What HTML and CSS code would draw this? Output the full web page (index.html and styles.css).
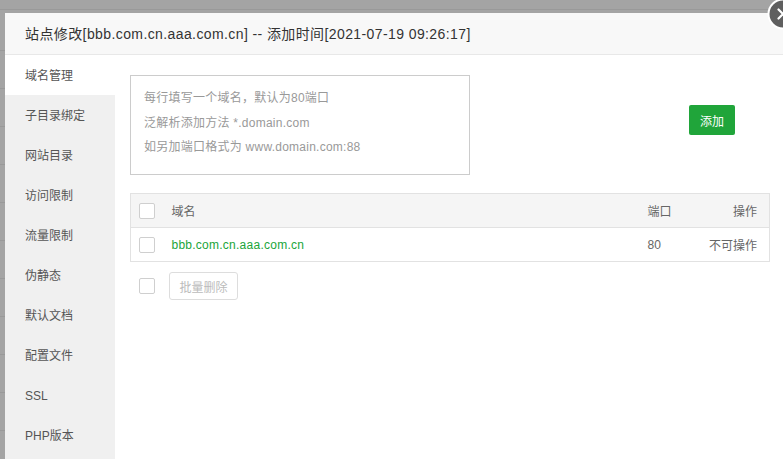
FILE: index.html
```html
<!DOCTYPE html>
<html lang="zh-CN">
<head>
<meta charset="utf-8">
<title>站点修改</title>
<link rel="stylesheet" href="styles.css">
</head>
<body>
<div class="layer">
  <div class="layer-title">站点修改[bbb.com.cn.aaa.com.cn] -- 添加时间[2021-07-19 09:26:17]</div>
  <span class="layer-close">
    <svg width="32" height="32" viewBox="0 0 32 32">
      <circle cx="16" cy="16" r="14.5" fill="#5f5f5f" stroke="#ffffff" stroke-width="2"/>
      <path d="M11.5 11.5 L20.5 20.5 M20.5 11.5 L11.5 20.5" stroke="#ffffff" stroke-width="2.2" stroke-linecap="round"/>
    </svg>
  </span>
  <div class="layer-body">
    <ul class="side-menu">
      <li class="active">域名管理</li>
      <li>子目录绑定</li>
      <li>网站目录</li>
      <li>访问限制</li>
      <li>流量限制</li>
      <li>伪静态</li>
      <li>默认文档</li>
      <li>配置文件</li>
      <li>SSL</li>
      <li>PHP版本</li>
    </ul>
    <div class="panel">
      <div class="add-row">
        <div class="domain-input">
          <div class="ph-line">每行填写一个域名，默认为80端口</div>
          <div class="ph-line">泛解析添加方法 *.domain.com</div>
          <div class="ph-line">如另加端口格式为 www.domain.com:88</div>
        </div>
        <button class="btn-add">添加</button>
      </div>
      <table class="domain-table">
        <colgroup>
          <col class="c-check"><col class="c-name"><col class="c-port"><col class="c-op">
        </colgroup>
        <thead>
          <tr>
            <th class="cell-check"><span class="checkbox"></span></th>
            <th>域名</th>
            <th>端口</th>
            <th class="cell-op">操作</th>
          </tr>
        </thead>
        <tbody>
          <tr>
            <td class="cell-check"><span class="checkbox"></span></td>
            <td class="domain-link">bbb.com.cn.aaa.com.cn</td>
            <td>80</td>
            <td class="cell-op">不可操作</td>
          </tr>
        </tbody>
      </table>
      <div class="batch-row">
        <span class="checkbox"></span>
        <button class="btn-batch" disabled>批量删除</button>
      </div>
    </div>
  </div>
</div>
</body>
</html>
```

FILE: styles.css
```css
html, body {
  margin: 0;
  padding: 0;
  overflow: hidden;
  height: 100%;
}

body {
  background-color: #a4a4a4;
  background-image: repeating-linear-gradient(to bottom, transparent 0, transparent 37px, #999999 37px, #999999 38px);
  background-position: 0 13px;
  padding: 13px 0 0 5px;
  box-sizing: border-box;
  font-family: "Liberation Sans", "Noto Sans CJK SC", sans-serif;
  font-size: 12px;
  color: #555;
}

.layer {
  position: relative;
  background: #fff;
  height: 460px;
  display: flex;
  flex-direction: column;
}

.layer-title {
  height: 40px;
  line-height: 40px;
  padding: 1px 0 0 20px;
  background: #f8f8f8;
  border-bottom: 1px solid #e8e8e8;
  font-size: 14px;
  color: #333;
  letter-spacing: 0.4px;
  white-space: nowrap;
}

.layer-close {
  position: absolute;
  right: -16px;
  top: -15px;
  width: 32px;
  height: 32px;
  display: block;
}

.layer-close svg {
  display: block;
}

.layer-body {
  flex: 1;
  display: flex;
}

.side-menu {
  list-style: none;
  margin: 0;
  padding: 0;
  width: 110px;
  background: #f0f0f0;
  flex-shrink: 0;
}

.side-menu li {
  height: 39px;
  line-height: 40px;
  padding: 1px 0 0 20px;
  color: #555;
  font-size: 12px;
}

.side-menu li.active {
  background: #fff;
}

.panel {
  flex: 1;
  padding: 20px 13px 0 15px;
}

.add-row {
  display: flex;
  align-items: flex-start;
}

.domain-input {
  width: 340px;
  height: 100px;
  box-sizing: border-box;
  border: 1px solid #cccccc;
  padding: 10px 12px 0 13px;
  color: #999;
  font-size: 12px;
  line-height: 24.5px;
  letter-spacing: 0.25px;
}

.btn-add {
  margin: 30px 0 0 219px;
  width: 46px;
  height: 30px;
  border: 0;
  border-radius: 2px;
  background: #20a53a;
  color: #fff;
  font-family: inherit;
  font-size: 12px;
  padding: 0;
}

.domain-table {
  margin-top: 18px;
  width: 640px;
  table-layout: fixed;
  border-collapse: collapse;
  border: 1px solid #e2e2e2;
  font-size: 12px;
  color: #666;
}

.c-check { width: 41px; }
.c-port { width: 58px; }
.c-op { width: 64px; }

.domain-table th,
.domain-table td {
  height: 33px;
  padding: 0;
  text-align: left;
  font-weight: normal;
  border-bottom: 1px solid #e2e2e2;
  vertical-align: middle;
  white-space: nowrap;
}

.domain-table thead th {
  background: #f5f5f5;
}

.domain-table .cell-check {
  padding-left: 8px;
}

.domain-table .cell-op {
  text-align: right;
  padding-right: 12px;
}

.domain-link {
  color: #20a53a;
  letter-spacing: 0.25px;
}

.checkbox {
  display: block;
  width: 14px;
  height: 14px;
  border: 1px solid #cfcfcf;
  border-radius: 2px;
  background: #fff;
}

.batch-row {
  display: flex;
  align-items: center;
  margin-top: 10px;
  padding-left: 9px;
}

.btn-batch {
  margin-left: 14px;
  width: 69px;
  height: 28px;
  box-sizing: border-box;
  border: 1px solid #dddddd;
  border-radius: 3px;
  background: #fff;
  color: #bbb;
  font-family: inherit;
  font-size: 12px;
  padding: 0;
}
```
